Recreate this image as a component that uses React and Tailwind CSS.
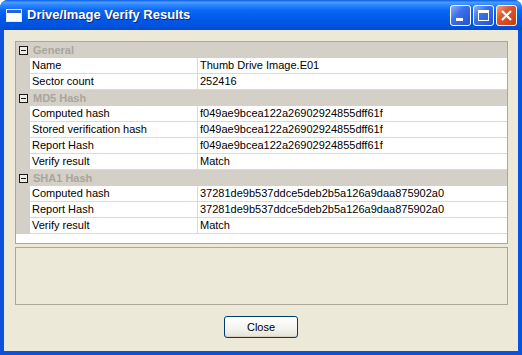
import React from "react";

const sections = [
  {
    title: "General",
    rows: [
      ["Name", "Thumb Drive Image.E01"],
      ["Sector count", "252416"],
    ],
  },
  {
    title: "MD5 Hash",
    rows: [
      ["Computed hash", "f049ae9bcea122a26902924855dff61f"],
      ["Stored verification hash", "f049ae9bcea122a26902924855dff61f"],
      ["Report Hash", "f049ae9bcea122a26902924855dff61f"],
      ["Verify result", "Match"],
    ],
  },
  {
    title: "SHA1 Hash",
    rows: [
      ["Computed hash", "37281de9b537ddce5deb2b5a126a9daa875902a0"],
      ["Report Hash", "37281de9b537ddce5deb2b5a126a9daa875902a0"],
      ["Verify result", "Match"],
    ],
  },
];

function MinusBox() {
  return (
    <div className="w-[9px] h-[9px] border border-[#1a1a1a] bg-[#ecebe6] flex items-center justify-center">
      <div className="w-[5px] h-px bg-[#1a1a1a]" />
    </div>
  );
}

function TitleButton({ children, close }) {
  return (
    <div
      className={`w-[21px] h-[21px] rounded-[3px] border border-white flex items-center justify-center ${
        close
          ? "bg-[linear-gradient(135deg,#f0a080_0%,#e0552a_40%,#c63d12_100%)]"
          : "bg-[linear-gradient(135deg,#8cb0f8_0%,#3b72e8_40%,#2452d0_100%)]"
      }`}
    >
      {children}
    </div>
  );
}

export default function App() {
  return (
    <div
      className="w-[522px] h-[355px] flex flex-col bg-[#0a52de] rounded-t-[8px] overflow-hidden"
      style={{ fontFamily: '"Liberation Sans", Arial, sans-serif' }}
    >
      {/* title bar */}
      <div className="h-[30px] shrink-0 flex items-center pl-[6px] pr-[5px] bg-[linear-gradient(to_bottom,#0a5fe6_0%,#4a9bff_8%,#2a84ff_18%,#0a67f4_35%,#0058e8_65%,#0052de_88%,#0a48c8_100%)]">
        <div className="w-[16px] h-[13px] bg-white border border-[#e8e8e8] flex flex-col mt-[1px]">
          <div className="h-[3px] bg-[#2b62d8]" />
        </div>
        <div className="ml-[5px] text-white font-bold text-[13px] [text-shadow:1px_1px_0_#0a2a80]">
          Drive/Image Verify Results
        </div>
        <div className="ml-auto flex gap-[2px]">
          <TitleButton>
            <div className="w-[7px] h-[3px] bg-white mt-[8px] -ml-[3px]" />
          </TitleButton>
          <TitleButton>
            <div className="w-[11px] h-[11px] border border-white border-t-[3px]" />
          </TitleButton>
          <TitleButton close>
            <svg width="13" height="13" viewBox="0 0 13 13">
              <path d="M2 2 L11 11 M11 2 L2 11" stroke="white" strokeWidth="2.2" />
            </svg>
          </TitleButton>
        </div>
      </div>

      {/* client area */}
      <div className="flex-1 mx-[4px] mb-[4px] bg-[#ece9d8] flex flex-col pt-[11px] pl-[11px] pr-[10px]">
        <div className="h-[203px] border border-[#aca899] bg-white flex flex-col text-[11px] text-black">
          {sections.map((s) => (
            <div key={s.title}>
              <div className="h-[16px] bg-[#d4d0c8] flex items-center">
                <div className="w-[14px] flex justify-center pl-[1px]">
                  <MinusBox />
                </div>
                <div className="pl-[3px] font-bold text-[#a8a69c]">{s.title}</div>
              </div>
              {s.rows.map(([k, v]) => (
                <div key={k} className="h-[16px] flex">
                  <div className="w-[14px] bg-[#d4d0c8]" />
                  <div className="w-[168px] pl-[2px] border-r border-b border-[#dcdad3] leading-[15px]">
                    {k}
                  </div>
                  <div className="flex-1 pl-[2px] border-b border-[#dcdad3] leading-[15px]">
                    {v}
                  </div>
                </div>
              ))}
            </div>
          ))}
        </div>

        <div className="mt-[3px] h-[58px] border border-[#aca899] bg-[#ece9d8]" />

        <div className="flex justify-center mt-[11px] pr-[1px]">
          <button className="w-[74px] h-[22px] rounded-[3px] border border-[#003c74] bg-[linear-gradient(to_bottom,#ffffff_0%,#f4f3ee_60%,#e3e1d6_100%)] text-[11px] text-black shadow-[inset_0_-1px_0_#d6d0c5]">
            Close
          </button>
        </div>
      </div>
    </div>
  );
}
